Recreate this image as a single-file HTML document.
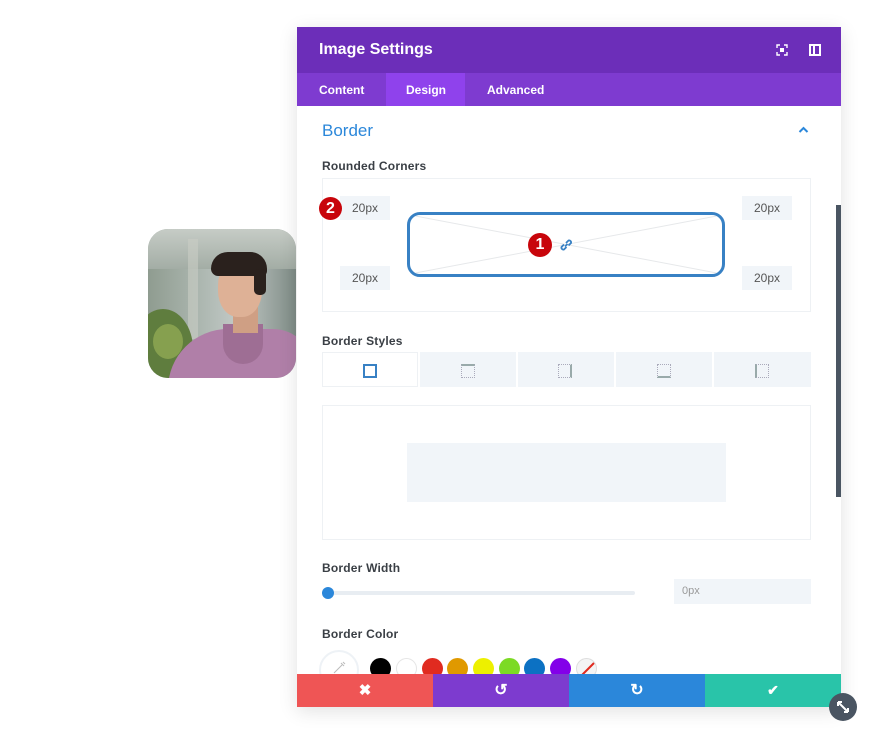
<!DOCTYPE html>
<html><head><meta charset="utf-8"><style>
*{box-sizing:border-box;margin:0;padding:0}
body{width:880px;height:750px;background:#fff;position:relative;overflow:hidden;font-family:"Liberation Sans",sans-serif}
.a{position:absolute}
.lbl{position:absolute;left:322px;font-size:12px;color:#3a3f45;font-weight:bold;letter-spacing:.2px}
.inp{position:absolute;width:50px;height:24px;background:#f1f5f9;color:#555;font-size:12px;text-align:center;line-height:24px}
.tab{position:absolute;top:352px;height:35px;width:96px;background:#f1f5f9}
.sw{position:absolute;top:658px;width:21px;height:21px;border-radius:50%}
</style></head><body>
<div class="a" style="left:148px;top:229px;width:148px;height:149px;border-radius:20px;overflow:hidden;background:linear-gradient(90deg,#8f9c90 0%,#b0bab4 40%,#c2c9c6 60%,#7f8c86 100%)">
 <div class="a" style="left:0;top:0;width:148px;height:40px;background:linear-gradient(180deg,#c6ccc6,#a3ada5)"></div>
 <div class="a" style="left:40px;top:10px;width:10px;height:100px;background:#c9cdc5;opacity:.6"></div>
 <div class="a" style="left:-15px;top:80px;width:60px;height:80px;border-radius:50%;background:#5f7d3e"></div>
 <div class="a" style="left:5px;top:95px;width:30px;height:35px;border-radius:50%;background:#86a04f"></div>
 <div class="a" style="left:20px;top:100px;width:145px;height:70px;border-radius:60px 40px 0 0;background:#b07fa8"></div>
 <div class="a" style="left:75px;top:95px;width:40px;height:40px;border-radius:0 0 25px 25px;background:#9e6e94"></div>
 <div class="a" style="left:85px;top:72px;width:25px;height:32px;background:#cf9f84"></div>
 <div class="a" style="left:70px;top:30px;width:44px;height:58px;border-radius:45%;background:#deb196"></div>
 <div class="a" style="left:63px;top:23px;width:56px;height:24px;border-radius:28px 28px 8px 12px;background:#2a211d"></div>
 <div class="a" style="left:106px;top:40px;width:12px;height:26px;border-radius:5px;background:#2a211d"></div>
</div>
<div class="a" style="left:297px;top:27px;width:544px;height:680px;background:#fff;box-shadow:0 4px 18px rgba(0,0,0,.12)"></div>
<div class="a" style="left:297px;top:27px;width:544px;height:46px;background:#6c2eb9"></div>
<div class="a" style="left:319px;top:41px;color:#fff;font-size:16px;font-weight:bold">Image Settings</div>
<svg class="a" style="left:776px;top:44px" width="12" height="12" viewBox="0 0 12 12" fill="none" stroke="#fff" stroke-width="1.4"><path d="M1 4V1h3M8 1h3v3M11 8v3H8M4 11H1V8"/><rect x="4" y="4" width="4" height="4" fill="#fff" stroke="none"/></svg>
<svg class="a" style="left:809px;top:44px" width="12" height="12" viewBox="0 0 12 12"><rect x="1" y="1" width="10" height="10" fill="none" stroke="#fff" stroke-width="2"/><rect x="4" y="1" width="2" height="10" fill="#fff"/></svg>
<div class="a" style="left:297px;top:73px;width:544px;height:33px;background:#7e3bd0"></div>
<div class="a" style="left:386px;top:73px;width:79px;height:33px;background:#8f42ec"></div>
<div class="a" style="left:319px;top:83px;color:#fff;font-size:12px;font-weight:bold">Content</div>
<div class="a" style="left:406px;top:83px;color:#fff;font-size:12px;font-weight:bold">Design</div>
<div class="a" style="left:487px;top:83px;color:#fff;font-size:12px;font-weight:bold">Advanced</div>
<div class="a" style="left:322px;top:121px;color:#2b87da;font-size:17px">Border</div>
<svg class="a" style="left:798px;top:126px" width="11" height="8" viewBox="0 0 11 8"><path d="M1.5 6L5.5 2L9.5 6" fill="none" stroke="#2b87da" stroke-width="2"/></svg>
<div class="lbl" style="top:159px">Rounded Corners</div>
<div class="a" style="left:322px;top:178px;width:489px;height:134px;border:1px solid #eef1f4"></div>
<div class="inp" style="left:340px;top:196px">20px</div>
<div class="inp" style="left:742px;top:196px">20px</div>
<div class="inp" style="left:340px;top:266px">20px</div>
<div class="inp" style="left:742px;top:266px">20px</div>
<div class="a" style="left:407px;top:212px;width:318px;height:65px;border:3px solid #3881c4;border-radius:13px;overflow:hidden">
<svg width="312" height="59"><path d="M0 0L312 59M312 0L0 59" stroke="#e6e8ea" stroke-width="1"/></svg></div>
<div class="a" style="left:319px;top:197px;width:23px;height:23px;border-radius:50%;background:#c8050b;color:#fff;font-size:16px;font-weight:bold;text-align:center;line-height:23px">2</div>
<div class="a" style="left:528px;top:233px;width:24px;height:24px;border-radius:50%;background:#c8050b;color:#fff;font-size:16px;font-weight:bold;text-align:center;line-height:24px">1</div>
<svg class="a" style="left:558px;top:237px" width="16" height="16" viewBox="0 0 16 16" fill="none" stroke="#3881c4" stroke-width="1.8"><path d="M7 9.5L9.5 7M6 7.5L3.5 10a2 2 0 0 0 2.5 2.5L8.5 10M8 6l2.5-2.5a2 2 0 0 1 2.5 2.5L10.5 8.5"/></svg>
<div class="lbl" style="top:334px">Border Styles</div>
<div class="tab" style="left:322px;background:#fff;border:1px solid #eef1f4"></div>
<div class="tab" style="left:420px"></div><div class="tab" style="left:518px"></div><div class="tab" style="left:616px"></div><div class="tab" style="left:714px;width:97px"></div>
<div class="a" style="left:363px;top:364px;width:14px;height:14px;border:2.5px solid #3881c4"></div>
<div class="a" style="left:461px;top:364px;width:14px;height:14px;border:1px dotted #aab;border-top:2px solid #9aa"></div>
<div class="a" style="left:558px;top:364px;width:14px;height:14px;border:1px dotted #aab;border-right:2px solid #9aa"></div>
<div class="a" style="left:657px;top:364px;width:14px;height:14px;border:1px dotted #aab;border-bottom:2px solid #9aa"></div>
<div class="a" style="left:755px;top:364px;width:14px;height:14px;border:1px dotted #aab;border-left:2px solid #9aa"></div>
<div class="a" style="left:322px;top:405px;width:489px;height:135px;border:1px solid #eef1f4"></div>
<div class="a" style="left:407px;top:443px;width:319px;height:59px;background:#f1f5f9"></div>
<div class="lbl" style="top:561px">Border Width</div>
<div class="a" style="left:328px;top:591px;width:307px;height:4px;background:#e8edf2;border-radius:2px"></div>
<div class="a" style="left:322px;top:587px;width:12px;height:12px;border-radius:50%;background:#2b87da"></div>
<div class="a" style="left:674px;top:579px;width:137px;height:25px;background:#f1f5f9;color:#999;font-size:11px;line-height:25px;padding-left:8px">0px</div>
<div class="lbl" style="top:627px">Border Color</div>
<div class="a" style="left:319px;top:650px;width:40px;height:40px;border-radius:50%;border:2px solid #eef2f6;background:#fff"></div>
<svg class="a" style="left:331px;top:660px" width="16" height="16" viewBox="0 0 16 16" fill="none" stroke="#bbb" stroke-width="1"><path d="M3 13L11 5M10 3l3 3M12 2l2 2"/></svg>
<div class="sw" style="left:370px;background:#000"></div>
<div class="sw" style="left:396px;background:#fff;border:1px solid #e5e5e5"></div>
<div class="sw" style="left:422px;background:#e02b20"></div>
<div class="sw" style="left:447px;background:#e09900"></div>
<div class="sw" style="left:473px;background:#edf000"></div>
<div class="sw" style="left:499px;background:#7cda24"></div>
<div class="sw" style="left:524px;background:#0c71c3"></div>
<div class="sw" style="left:550px;background:#8300e9"></div>
<div class="sw" style="left:576px;background:#f4f4f4;border:1px solid #ddd;overflow:hidden"><svg class="a" style="left:0;top:0" width="20" height="20"><path d="M4 17L17 4" stroke="#e02b20" stroke-width="2"/></svg></div>
<div class="a" style="left:836px;top:205px;width:5px;height:292px;background:#4a5562"></div>
<div class="a" style="left:297px;top:674px;width:136px;height:33px;background:#ef5555;color:#fff;text-align:center;line-height:33px;font-size:15px;font-weight:bold">✖</div>
<div class="a" style="left:433px;top:674px;width:136px;height:33px;background:#7d3bcf;color:#fff;text-align:center;line-height:33px;font-size:16px;font-weight:bold">↺</div>
<div class="a" style="left:569px;top:674px;width:136px;height:33px;background:#2b87da;color:#fff;text-align:center;line-height:33px;font-size:16px;font-weight:bold">↻</div>
<div class="a" style="left:705px;top:674px;width:136px;height:33px;background:#29c4a9;color:#fff;text-align:center;line-height:33px;font-size:14px;font-weight:bold">✔</div>
<div class="a" style="left:829px;top:693px;width:28px;height:28px;border-radius:50%;background:#4a5562"></div>
<svg class="a" style="left:835px;top:699px" width="16" height="16" viewBox="0 0 16 16" stroke="#fff" stroke-width="2" fill="none"><path d="M3 3L13 13M3 3h4M3 3v4M13 13H9M13 13V9"/></svg>
</body></html>
